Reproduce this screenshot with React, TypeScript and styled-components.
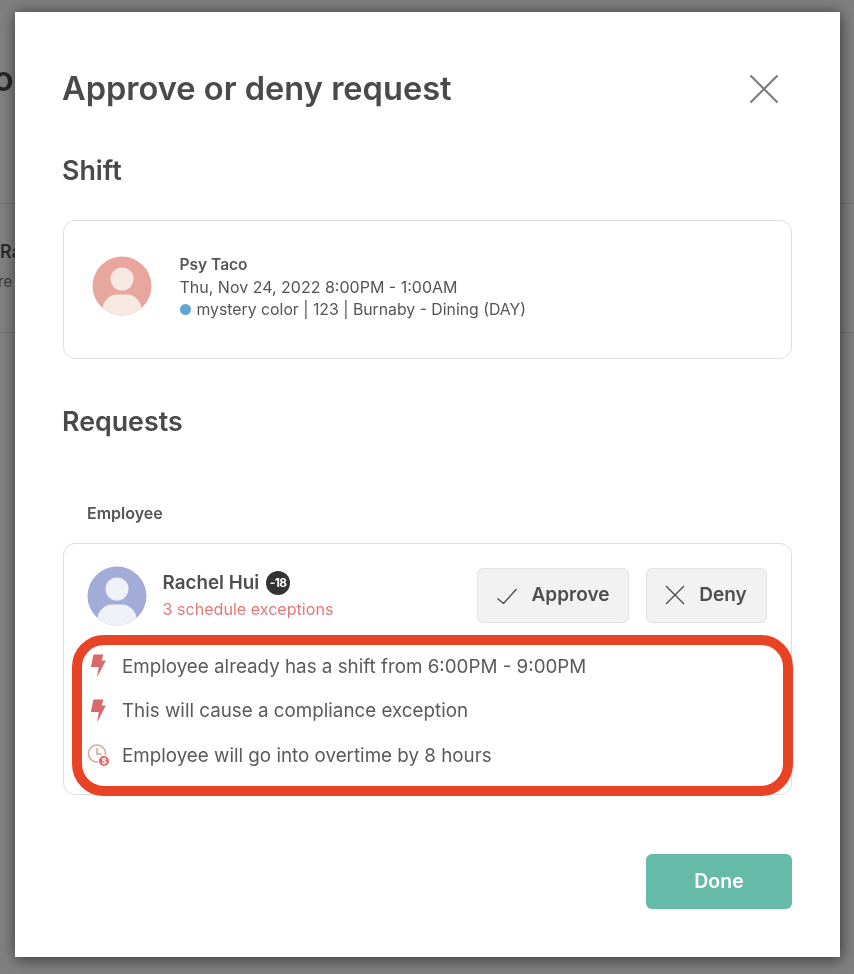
import styled, { createGlobalStyle } from 'styled-components';

const GlobalStyle = createGlobalStyle`
  html, body {
    margin: 0;
    padding: 0;
    background: #808080;
  }

  body {
    font-family: 'Inter', 'Noto Sans', sans-serif;
    color: #4a4a4a;
  }
`;

const EXCEPTIONS = [
  { id: 'shift', kind: 'bolt', text: 'Employee already has a shift from 6:00PM - 9:00PM' },
  { id: 'compliance', kind: 'bolt', text: 'This will cause a compliance exception' },
  { id: 'overtime', kind: 'clock', text: 'Employee will go into overtime by 8 hours' },
];

const Avatar = ({ bg, fg }: { bg: string; fg: string }) => (
  <svg width="60" height="60" viewBox="0 0 60 60">
    <defs>
      <clipPath id={`avatar-${bg.slice(1)}`}>
        <circle cx="30" cy="30" r="29.5" />
      </clipPath>
    </defs>
    <g clipPath={`url(#avatar-${bg.slice(1)})`}>
      <rect width="60" height="60" fill={bg} />
      <circle cx="30" cy="23" r="11.5" fill={fg} />
      <rect x="10.5" y="38.5" width="39" height="30" rx="15" fill={fg} />
    </g>
  </svg>
);

const BoltIcon = () => (
  <svg width="16" height="24" viewBox="0 0 16 24">
    <path d="M3.5 0.5H13.5L11.5 6.5H15.8L7 23.5L8.8 13H0.8Z" fill="#d9686a" />
  </svg>
);

const ClockIcon = () => (
  <svg width="23" height="23" viewBox="0 0 23 23">
    <circle cx="10" cy="9.5" r="8.5" fill="none" stroke="#e59a9b" strokeWidth="1.5" />
    <path d="M10 4V10H14.5" fill="none" stroke="#e59a9b" strokeWidth="1.5" />
    <circle cx="17" cy="17" r="6" fill="#fff" />
    <circle cx="17" cy="17" r="5" fill="#d9686a" />
    <text x="17" y="19.8" fontSize="8" fontWeight="700" fill="#fff" textAnchor="middle">$</text>
  </svg>
);

const CheckIcon = () => (
  <svg width="22" height="18" viewBox="0 0 22 18">
    <path d="M1.5 12.5L7.5 17.5L20.5 3" fill="none" stroke="#4f4f4f" strokeWidth="1.4" />
  </svg>
);

const CrossIcon = ({ size, color, weight }: { size: number; color: string; weight: number }) => (
  <svg width={size} height={size} viewBox="0 0 20 20">
    <path d="M1 1L19 19M19 1L1 19" fill="none" stroke={color} strokeWidth={weight} />
  </svg>
);

const App = () => {
  return (
    <>
      <GlobalStyle />
      <Page>
        <BackHeading>o</BackHeading>
        <BackRow>
          <BackName>Ra</BackName>
          <BackNote>re</BackNote>
        </BackRow>
        <Modal>
          <TitleRow>
            <Title>Approve or deny request</Title>
            <CloseButton>
              <CrossIcon size={30} color="#7c7c7c" weight={1.5} />
            </CloseButton>
          </TitleRow>

          <SectionTitle>Shift</SectionTitle>
          <ShiftCard>
            <Avatar bg="#e8a79c" fg="#f6e9e4" />
            <ShiftInfo>
              <ShiftName>Psy Taco</ShiftName>
              <ShiftLine>Thu, Nov 24, 2022 8:00PM - 1:00AM</ShiftLine>
              <ShiftLine $size={15.8}>
                <ColorDot />
                mystery color | 123 | Burnaby - Dining (DAY)
              </ShiftLine>
            </ShiftInfo>
          </ShiftCard>

          <RequestsTitle>Requests</RequestsTitle>
          <ColumnLabel>Employee</ColumnLabel>
          <RequestCard>
            <RequestHead>
              <Avatar bg="#a3acd6" fg="#eff1f8" />
              <Employee>
                <NameRow>
                  <EmployeeName>Rachel Hui</EmployeeName>
                  <AgeBadge>-18</AgeBadge>
                </NameRow>
                <ExceptionCount>3 schedule exceptions</ExceptionCount>
              </Employee>
              <Actions>
                <ActionButton $width={152}>
                  <CheckIcon />
                  Approve
                </ActionButton>
                <ActionButton $width={121}>
                  <CrossIcon size={20} color="#4f4f4f" weight={1.4} />
                  Deny
                </ActionButton>
              </Actions>
            </RequestHead>
            <ExceptionList>
              {EXCEPTIONS.map((item) => (
                <ExceptionRow key={item.id}>
                  <ExceptionIcon>{item.kind === 'bolt' ? <BoltIcon /> : <ClockIcon />}</ExceptionIcon>
                  {item.text}
                </ExceptionRow>
              ))}
            </ExceptionList>
            <Highlight />
          </RequestCard>

          <Footer>
            <DoneButton>Done</DoneButton>
          </Footer>
        </Modal>
      </Page>
    </>
  );
};

export default App;

const Page = styled.div`
  position: relative;
  width: 854px;
  height: 974px;
  overflow: hidden;
  background: #808080;
`;

const BackHeading = styled.div`
  padding-top: 58px;
  margin-left: -7px;
  height: 204px;
  box-sizing: border-box;
  border-bottom: 1px solid #707070;
  font-size: 34px;
  font-weight: 600;
  color: #262626;
  filter: blur(0.5px);
`;

const BackRow = styled.div`
  height: 129px;
  padding-top: 37px;
  box-sizing: border-box;
  border-bottom: 1px solid #707070;
  filter: blur(0.5px);
`;

const BackName = styled.div`
  font-size: 18px;
  font-weight: 600;
  color: #2c2c2c;
  margin-bottom: 10px;
`;

const BackNote = styled.div`
  font-size: 15px;
  color: #3a3a3a;
  margin-left: -2px;
`;

const Modal = styled.div`
  position: absolute;
  top: 12px;
  left: 15px;
  width: 825px;
  height: 945px;
  box-sizing: border-box;
  padding: 50px 48px 0;
  background: #fff;
  box-shadow: 0 0 14px rgba(0, 0, 0, 0.45), 2px 6px 12px rgba(0, 0, 0, 0.2);
  filter: blur(0.4px);
`;

const TitleRow = styled.div`
  display: flex;
  align-items: center;
  justify-content: space-between;
  height: 52px;
  margin-bottom: 36px;
`;

const Title = styled.h1`
  margin: 0 0 0 -1px;
  font-size: 32.6px;
  font-weight: 600;
  color: #4a4a4a;
`;

const CloseButton = styled.div`
  display: flex;
  margin: 2px 13px 0 0;
`;

const SectionTitle = styled.h2`
  margin: 0 0 0 -1px;
  padding-top: 4px;
  height: 66px;
  font-size: 26.8px;
  font-weight: 600;
  color: #4a4a4a;
`;

const RequestsTitle = styled(SectionTitle)`
  padding-top: 46px;
  height: 86px;
`;

const ShiftCard = styled.div`
  display: flex;
  align-items: center;
  gap: 28px;
  width: 729px;
  height: 139px;
  box-sizing: border-box;
  padding: 0 0 7px 27.5px;
  background: #fff;
  border: 1.5px solid #dedede;
  border-radius: 12px;
`;

const ShiftInfo = styled.div`
  display: flex;
  flex-direction: column;
  gap: 3px;
  margin-top: 2px;
`;

const ShiftName = styled.div`
  font-size: 15.5px;
  font-weight: 600;
  color: #555;
`;

const ShiftLine = styled.div<{ $size?: number }>`
  display: flex;
  align-items: center;
  font-size: ${(props) => props.$size ?? 16}px;
  color: #555;
`;

const ColorDot = styled.span`
  width: 11px;
  height: 11px;
  margin-right: 6px;
  border-radius: 50%;
  background: #5ba7d8;
`;

const ColumnLabel = styled.div`
  padding: 12px 0 0 24px;
  height: 40px;
  font-size: 16px;
  font-weight: 600;
  color: #555;
`;

const RequestCard = styled.div`
  position: relative;
  width: 729px;
  height: 252px;
  box-sizing: border-box;
  background: #fff;
  border: 1.5px solid #dedede;
  border-radius: 12px;
`;

const RequestHead = styled.div`
  display: flex;
  align-items: center;
  gap: 16px;
  padding: 21.5px 24.5px 0 22.5px;
`;

const Employee = styled.div`
  display: flex;
  flex-direction: column;
  gap: 4px;
  margin-top: -2px;
`;

const NameRow = styled.div`
  display: flex;
  align-items: center;
  gap: 7px;
`;

const EmployeeName = styled.span`
  font-size: 18.8px;
  font-weight: 600;
  color: #4f4f4f;
`;

const AgeBadge = styled.span`
  display: flex;
  align-items: center;
  justify-content: center;
  width: 24px;
  height: 24px;
  border-radius: 50%;
  background: #333;
  color: #fff;
  font-size: 12px;
  font-weight: 700;
  letter-spacing: -0.6px;
`;

const ExceptionCount = styled.span`
  font-size: 16.1px;
  color: #e2787a;
`;

const Actions = styled.div`
  display: flex;
  gap: 17px;
  margin-left: auto;
`;

const ActionButton = styled.button<{ $width: number }>`
  display: flex;
  align-items: center;
  justify-content: center;
  gap: 14px;
  width: ${(props) => props.$width}px;
  height: 55px;
  padding: 0 0 2px 0;
  background: #f2f2f2;
  border: 1.5px solid #e2e2e2;
  border-radius: 6px;
  font-family: inherit;
  font-size: 19px;
  font-weight: 600;
  color: #4f4f4f;
`;

const ExceptionList = styled.div`
  display: flex;
  flex-direction: column;
  padding: 18.5px 0 0 21.5px;
`;

const ExceptionRow = styled.div`
  display: flex;
  align-items: center;
  height: 44.5px;
  font-size: 18.8px;
  color: #5a5a5a;
`;

const ExceptionIcon = styled.span`
  display: flex;
  justify-content: center;
  width: 25px;
  margin-right: 11.5px;
`;

const Highlight = styled.div`
  position: absolute;
  top: 90.5px;
  left: 7.5px;
  width: 721px;
  height: 161px;
  box-sizing: border-box;
  border: 10px solid #e94325;
  border-radius: 32px;
`;

const Footer = styled.div`
  display: flex;
  justify-content: flex-end;
  padding-top: 59px;
  width: 729px;
`;

const DoneButton = styled.button`
  width: 146px;
  height: 55px;
  padding: 0 0 2px;
  background: #65baa8;
  border: none;
  border-radius: 6px;
  font-family: inherit;
  font-size: 19.5px;
  font-weight: 600;
  color: #fff;
`;
